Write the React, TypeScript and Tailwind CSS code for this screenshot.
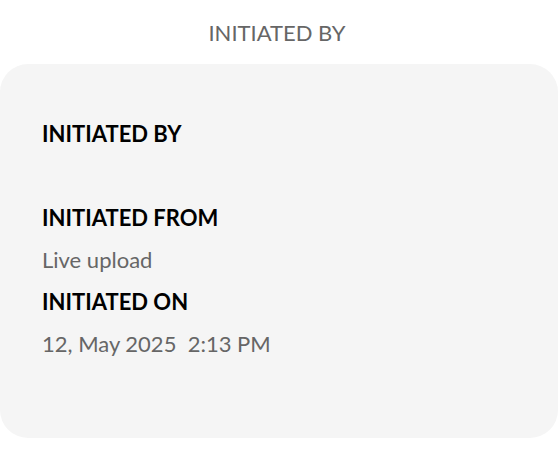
import React from 'react';

interface Field {
  label: string;
  value: string;
}

const fields: Field[] = [
  { label: 'INITIATED BY', value: '' },
  { label: 'INITIATED FROM', value: 'Live upload' },
  { label: 'INITIATED ON', value: '12, May 2025  2:13 PM' },
];

export default function App() {
  return (
    <div className="w-[560px] h-[459px] bg-white" style={{ fontFamily: 'Lato, "Open Sans", sans-serif' }}>
      <div className="pt-[16px] pr-[6px] text-center text-[22px] leading-[34px] text-[#666666]">INITIATED BY</div>
      <div className="mt-[14px] w-[558px] h-[374px] rounded-[28px] bg-[#f5f5f5] pl-[42px] pt-[49px]">
        {fields.map(field => (
          <div key={field.label}>
            <div className="text-[22px] leading-[42px] font-bold text-black">{field.label}</div>
            <div className="text-[22px] leading-[42px] text-[#666666] whitespace-pre min-h-[42px]">{field.value}</div>
          </div>
        ))}
      </div>
    </div>
  );
}
